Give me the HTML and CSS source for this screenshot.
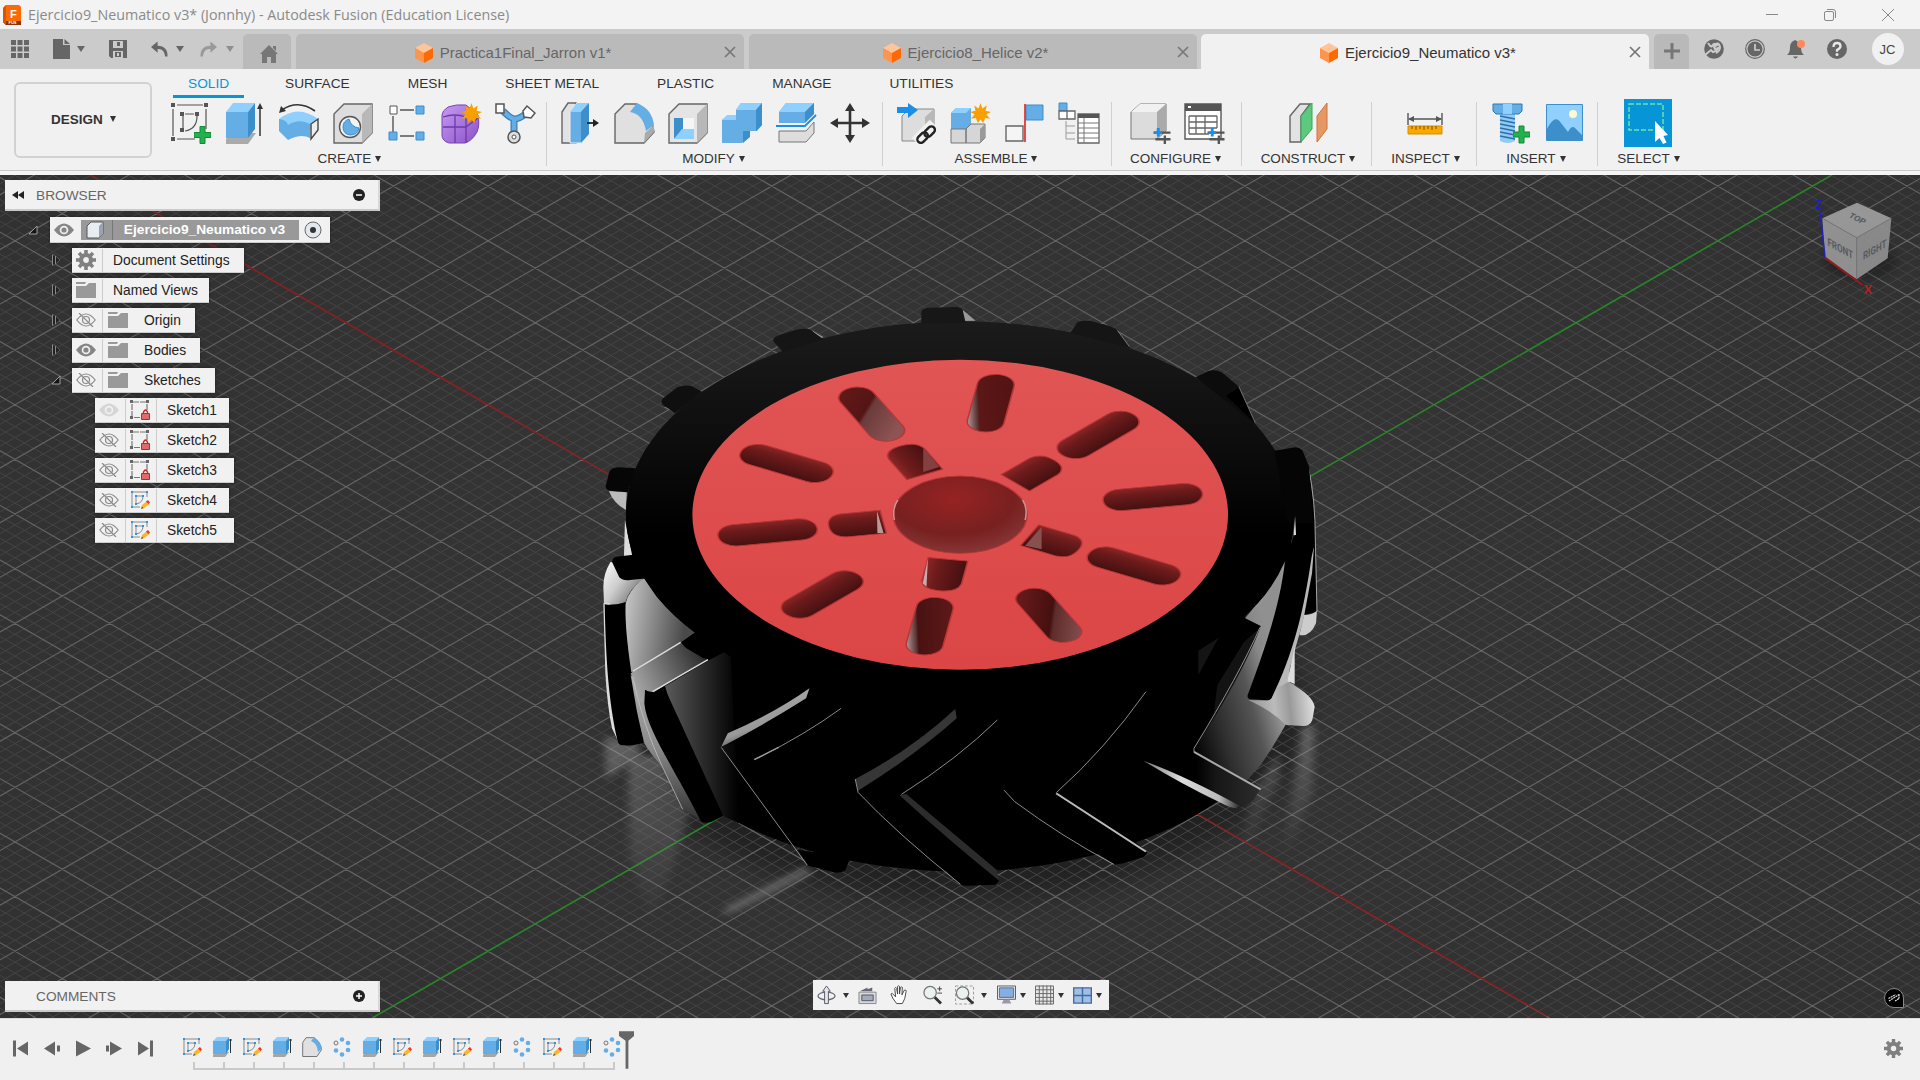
FILE: index.html
```html
<!DOCTYPE html>
<html lang="en">
<head>
<meta charset="utf-8">
<title>Ejercicio9_Neumatico v3* (Jonnhy) - Autodesk Fusion (Education License)</title>
<link rel="stylesheet" href="styles.css">
</head>
<body>
<svg class="defs" width="0" height="0" aria-hidden="true">
  <defs>
    <linearGradient id="gPurple" x1="0" y1="0" x2="1" y2="1"><stop offset="0" stop-color="#c79bf2"/><stop offset="1" stop-color="#8a52c8"/></linearGradient>
  </defs>
  <symbol id="doc-cube" viewBox="0 0 18 20"><path d="M9 0l9 5-9 5-9-5z" fill="#ffc49a"/><path d="M0 5l9 5v10l-9-5z" fill="#ff944d"/><path d="M18 5l-9 5v10l9-5z" fill="#ff6a00"/></symbol>
  <symbol id="close" viewBox="0 0 12 12"><path d="M1 1l10 10M11 1L1 11" stroke="currentColor" stroke-width="1.7"/></symbol>
  <symbol id="star" viewBox="0 0 20 20"><path d="M10 0l1.800 5.200L16 2.400l-1.200 5L20 8.500l-4.400 2.300 3.400 4.200-4.600-.8L12.600 19 10 15.800 7.400 19l-1.800-4.800L1 15l3.400-4.200L0 8.500l5.200-1.100L4 2.400l4.200 2.800z" fill="#f9a000"/></symbol>
  <symbol id="cfg" viewBox="0 0 18 18"><path d="M0 6h18M2 13h16M12 9v9" stroke="#555" stroke-width="2.500"/><path d="M5 1v9M1 6h8" stroke="#1a8fe6" stroke-width="3"/></symbol>
  <symbol id="plus" viewBox="0 0 17 17"><path d="M6 0h5v6h6v5h-6v6H6v-6H0V6h6z" fill="#22b14c" stroke="#138a35"/></symbol>

  <symbol id="r-sketch" viewBox="0 0 42 42"><g fill="none" stroke="#555" stroke-width="1.200"><path d="M7 3h26M3 7v27M36 7v20M7 37h18M13 14v12M15 12h9M27 14q0 13-12 15"/></g><path d="M1 1h4v4H1zM34 1h4v4h-4zM1 35h4v4H1zM10 10h4v4h-4zM25 10h4v4h-4zM10 26h4v4h-4z" fill="#555"/><use href="#plus" x="24" y="24" width="17" height="18"/></symbol>
  <symbol id="r-extrude" viewBox="0 0 42 42"><path d="M2 37l7-6h23l-8 11H2z" fill="#aaa"/><path d="M2 10L9 1h22l-7 9z" fill="#8fd0ff"/><path d="M2 10h22v26H2z" fill="#64ade5"/><path d="M24 10l7-9v26l-7 9z" fill="#3d8fcb"/><path d="M36 34V4" stroke="#333" stroke-width="1.500"/><path d="M36 1l3 6h-6z" fill="#333"/></symbol>
  <symbol id="r-revolve" viewBox="0 0 42 42"><path d="M1 17Q20 2 40 17l-7 11q-10-7-24 0z" fill="#8fd0ff"/><path d="M1 17q8 1 9 6 11-7 22-1v14q-9-5-22 2L1 29z" fill="#64ade5"/><path d="M33 22l7-5v11l-7 9z" fill="#eee" stroke="#444" stroke-width="1.400"/><path d="M4 8Q20-3 37 9" fill="none" stroke="#333" stroke-width="1.600"/><path d="M1 11l2-7 5 5z" fill="#333"/></symbol>
  <symbol id="r-hole" viewBox="0 0 42 42"><path d="M2 12L12 2h28v29L30 41H2z" fill="#ddd" stroke="#666" stroke-width="1.400"/><path d="M30 12L40 2v29L30 41z" fill="#b8b8b8"/><circle cx="18" cy="25" r="10.500" fill="#f3f3f3" stroke="#555" stroke-width="1.400"/><path d="M17 17q2 8 10 9-1 7-9 7-7-1-7-8 0-6 6-8z" fill="#64ade5" stroke="#3d8fcb"/></symbol>
  <symbol id="r-pattern" viewBox="0 0 42 42"><path d="M14 8h14M7 14v16M14 34h14" stroke="#555" stroke-width="1.400"/><path d="M4 4h7v8H4z" fill="#fff" stroke="#555"/><path d="M30 4h8v8h-8zM3 30h8v8H3zM30 30h8v8h-8z" fill="#64ade5" stroke="#3d8fcb"/></symbol>
  <symbol id="r-form" viewBox="0 0 42 42"><path d="M2 13Q2 9 8 5q8-3 18-2l12 10q2 10-1 17-5 9-12 11H9q-7-2-7-8z" fill="url(#gPurple)" stroke="#7b43b8"/><path d="M3 25h23l12-9M15 14v27M26 14v27M3 15q12-4 23 0l8-7" fill="none" stroke="#6d3aa8" stroke-width="1.300"/><use href="#star" x="21" y="1" width="21" height="21"/></symbol>
  <symbol id="r-pipe" viewBox="0 0 42 42"><path d="M9 9q8 8 12 8t12-6M20 16v19" fill="none" stroke="#3d7fb0" stroke-width="7"/><path d="M9 9q8 8 12 8t12-6M20 16v19" fill="none" stroke="#64ade5" stroke-width="4.500"/><path d="M2 2h8v9H2z" fill="#fff" stroke="#555" stroke-width="1.500"/><path d="M33 4l8 7-4 5-7-1-1-6z" fill="#fff" stroke="#555" stroke-width="1.500"/><circle cx="20" cy="35" r="6" fill="#ddd" stroke="#555" stroke-width="1.500"/><circle cx="20" cy="35" r="2" fill="#fff" stroke="#555"/></symbol>
  <symbol id="r-press" viewBox="0 0 42 42"><path d="M3 10L9 1h8v40H3z" fill="#e2e2e2" stroke="#666" stroke-width="1.400"/><path d="M11 10l7-9h12v31l-8 9H11z" fill="#64ade5" stroke="#f1f1f1"/><path d="M11 10l7-9h12l-8 9z" fill="#8fd0ff"/><path d="M22 10l8-9v31l-8 9z" fill="#3d8fcb"/><path d="M28 21h8" stroke="#222" stroke-width="1.800"/><path d="M34 17l6 4-6 4z" fill="#222"/></symbol>
  <symbol id="r-fillet" viewBox="0 0 42 42"><path d="M2 12L12 2h11q14 7 18 28L31 41H2z" fill="#e0e0e0" stroke="#666" stroke-width="1.400"/><path d="M17 10L24 1q15 6 17 22l-8 6Q30 12 17 10z" fill="#64ade5"/><path d="M32 31l9-8v7L31 41z" fill="#aaa"/></symbol>
  <symbol id="r-shell" viewBox="0 0 42 42"><path d="M2 12L12 2h28v29L30 41H2z" fill="#e4e4e4" stroke="#666" stroke-width="1.400"/><path d="M30 12L40 2v29L30 41z" fill="#b8b8b8"/><path d="M7 16h20v21H7z" fill="#f5f5f5"/><path d="M7 16h9v12l-9 9z" fill="#3d8fcb"/><path d="M7 37l8-10h12v10z" fill="#8fd0ff"/></symbol>
  <symbol id="r-combine" viewBox="0 0 42 42"><path d="M1 18l5-4h9V8l5-7h21v22l-5 6h-9v6l-6 6H1z" fill="#64ade5"/><path d="M15 8l5-7h21l-6 7zM1 18l5-5h9v5z" fill="#8fd0ff"/><path d="M35 8l6-7v22l-6 6zM22 29h7v6l-7 6z" fill="#3d8fcb"/></symbol>
  <symbol id="r-split" viewBox="0 0 42 42"><path d="M4 10l7-9h28v12l-9 8H4z" fill="#64ade5"/><path d="M4 10l7-9h28l-9 9z" fill="#8fd0ff"/><path d="M30 10l9-9v12l-9 8z" fill="#3d8fcb"/><path d="M4 29h27l8-9v11l-8 9H4z" fill="#ddd" stroke="#777"/><path d="M1 24h29l11-11" fill="none" stroke="#f1f1f1" stroke-width="4"/><path d="M1 24h29l11-11" fill="none" stroke="#1a8fe6" stroke-width="1.800"/></symbol>
  <symbol id="r-move" viewBox="0 0 42 42"><path d="M21 5v32M5 21h32" stroke="#333" stroke-width="2.600"/><path d="M21 1l5 8H16zM21 41l5-8H16zM1 21l8-5v10zM41 21l-8-5v10z" fill="#333"/></symbol>
  <symbol id="r-insertlink" viewBox="0 0 42 42"><path d="M6 14l7-7h25v22l-9 10H6z" fill="#ddd" stroke="#888"/><path d="M29 15l9-8v22l-9 10z" fill="#b8b8b8"/><path d="M1 5h11V1l10 7-10 8v-5H1z" fill="#1a8fe6"/><path d="M20 40l18-18" stroke="#f1f1f1" stroke-width="12"/><g fill="none" stroke="#222" stroke-width="2.400"><rect x="21" y="32" width="12" height="7" rx="3.500" transform="rotate(-45 27 36)"/><rect x="28" y="26" width="12" height="7" rx="3.500" transform="rotate(-45 34 30)"/></g></symbol>
  <symbol id="r-component" viewBox="0 0 42 42"><path d="M1 11l5-5h15v17l-4 4H1z" fill="#64ade5"/><path d="M1 11l5-5h15l-5 5z" fill="#8fd0ff"/><path d="M1 27h15v14H1zM16 27l5-5h14v14l-5 5H16z" fill="#d6d6d6" stroke="#777"/><path d="M30 27l5-5v14l-5 5z" fill="#999"/><use href="#star" x="20" y="1" width="21" height="21"/></symbol>
  <symbol id="r-joint" viewBox="0 0 42 42"><path d="M22 3h17v15H22z" fill="#64ade5" stroke="#3d8fcb"/><path d="M2 24h17v15H2z" fill="#f5f5f5" stroke="#666" stroke-width="1.400"/><path d="M21 2v38" stroke="#d22" stroke-width="1.600"/></symbol>
  <symbol id="r-bom" viewBox="0 0 42 42"><path d="M1 1h8v8H1z" fill="#64ade5" stroke="#3d8fcb"/><path d="M1 9h8v8H1zM9 9h8v8H9z" fill="#fff" stroke="#666" stroke-width="1.300"/><path d="M8 19v18M8 24h9M8 31h9M8 37h9" stroke="#999" fill="none"/><path d="M20 12h21v29H20z" fill="#fff" stroke="#666" stroke-width="1.300"/><path d="M20 12h21v4H20z" fill="#555"/><path d="M20 21h21M20 26h21M20 31h21M20 36h21M26 16v25" stroke="#777"/></symbol>
  <symbol id="r-config" viewBox="0 0 42 42"><path d="M2 10l9-8h26v27l-9 8H2z" fill="#dcdcdc" stroke="#777"/><path d="M2 10l9-8h26l-9 8z" fill="#f1f1f1"/><path d="M28 10l9-8v27l-9 8z" fill="#aaa"/><use href="#cfg" x="24" y="25" width="18" height="17"/></symbol>
  <symbol id="r-table" viewBox="0 0 42 42"><path d="M2 2h36v35H2z" fill="#fff" stroke="#555" stroke-width="1.400"/><path d="M2 2h36v7H2z" fill="#555"/><path d="M5 4h3v2H5z" fill="#fff"/><path d="M6 14h28M6 20h28M6 26h28M6 32h20M6 14v18M13 14v18M22 14v18M34 14v12" stroke="#666" fill="none" stroke-width="1.300"/><use href="#cfg" x="24" y="25" width="18" height="17"/></symbol>
  <symbol id="r-plane" viewBox="0 0 42 42"><path d="M2 14L12 2h10L13 14v26H2z" fill="#e2e2e2" stroke="#666" stroke-width="1.400"/><path d="M13 14L24 1v26L13 40z" fill="#5cc97f" stroke="#35a65b"/><path d="M29 14L39 1v26L29 40z" fill="#e59864" stroke="#c87740"/></symbol>
  <symbol id="r-measure" viewBox="0 0 42 42"><path d="M4 11v12M38 11v12M5 17h32" stroke="#555" stroke-width="1.400"/><path d="M4 17l6-3v6zM38 17l-6-3v6z" fill="#555"/><path d="M4 24h34v8H4z" fill="#f9a800" stroke="#d98c00"/><path d="M8 24v3M12 24v4M16 24v3M20 24v4M24 24v3M28 24v4M32 24v3" stroke="#7a5200"/></symbol>
  <symbol id="r-bolt" viewBox="0 0 42 42"><path d="M8 11h15v28q-7 4-15 0z" fill="#8ecbf7"/><path d="M8 14l15 3M8 18l15 3M8 22l15 3M8 26l15 3M8 30l15 3M8 34l15 3" stroke="#2e6fa5" stroke-width="1.500"/><path d="M1 2h29v7l-3 3H4L1 9z" fill="#64ade5" stroke="#2f78b3"/><path d="M11 2h9v10h-9z" fill="#8fd0ff"/><use href="#plus" x="21" y="23" width="17" height="19"/></symbol>
  <symbol id="r-image" viewBox="0 0 42 42"><path d="M2.500 2.500h36v36h-36z" fill="#8fd0ff" stroke="#3d8fcb"/><path d="M3 27q8-16 14-6l7 9q4-8 8-3l6 6v5H3z" fill="#3d8fcb"/><circle cx="29" cy="12" r="4" fill="#fffbd0"/></symbol>
  <symbol id="r-select" viewBox="0 0 48 48"><path d="M0 0h48v48H0z" fill="#0696d7"/><path d="M5 5h34v26H5z" fill="none" stroke="#6fe0a8" stroke-width="1.500" stroke-dasharray="5 2"/><path d="M31 22v21l4.500-4 3.500 6 3.500-1.500-3-6.500 4.500-1z" fill="#fff"/></symbol>

  <symbol id="t-sketch" viewBox="0 0 20 20"><path d="M2 2h15v5M2 2v15h8M6 6h7M6 6v8q7-1 7-8" fill="none" stroke="#8a8a8a" stroke-width="1"/><path d="M1 1h2v2H1zM16 1h2v2h-2zM1 16h2v2H1zM5 5h2v2H5zM12 5h2v2h-2zM5 13h2v2H5z" fill="#2b95e0"/><path d="M11 19l1-4 5-4 2.500 3-5 4z" fill="#f7b733"/><path d="M16 11.500l2-1.500 2 2.500-1.500 1.500z" fill="#e33"/><path d="M11 19l1-2.500 1.500 1.500z" fill="#555"/></symbol>
  <symbol id="t-extrude" viewBox="0 0 20 20"><path d="M1 18l3-3h13l-4 5H1z" fill="#a5a5a5"/><path d="M1 4l4-4h12l-3 4z" fill="#8fd0ff"/><path d="M1 4h13v13H1z" fill="#64ade5"/><path d="M14 4l3-4v12l-3 5z" fill="#3d8fcb"/><path d="M18.500 2v14M17 3h3" stroke="#333"/></symbol>
  <symbol id="t-fillet" viewBox="0 0 20 20"><path d="M.7 5.500L4 .700h8q7 5 7.500 12L15 19.500H.700z" fill="#e0e0e0" stroke="#777"/><path d="M9 4l3-3.500q7 4 8 11L16 15Q15 6 9 4z" fill="#64ade5"/></symbol>
  <symbol id="t-pattern" viewBox="0 0 20 20"><g fill="#64ade5"><circle cx="10" cy="2.500" r="2.300"/><circle cx="16" cy="6" r="2.300"/><circle cx="16" cy="13" r="2.300"/><circle cx="10" cy="17.500" r="2.300"/><circle cx="4" cy="13.500" r="2.300"/></g><circle cx="4" cy="6" r="2" fill="#eee" stroke="#777"/></symbol>

  <symbol id="gear" viewBox="0 0 20 20"><circle cx="10" cy="10" r="5" fill="none" stroke="currentColor" stroke-width="4.200"/><path d="M10 0v4M10 16v4M0 10h4M16 10h4M3 3l3 3M14 14l3 3M3 17l3-3M14 6l3-3" stroke="currentColor" stroke-width="3.600"/></symbol>
  <symbol id="folder" viewBox="0 0 22 18"><path d="M1 1h10l-1 2H1zM1 5h10l3-3h7v15H1z" fill="#999"/></symbol>
  <symbol id="eye" viewBox="0 0 20 14"><path d="M0 7q10-13 20 0-10 13-20 0z" fill="#858585"/><circle cx="10" cy="7" r="4.300" fill="#f1f1f1"/><circle cx="10" cy="7" r="2.600" fill="#858585"/></symbol>
  <symbol id="eye-off" viewBox="0 0 20 14"><path d="M.8 7q9.200-12 18.400 0-9.200 12-18.400 0z" fill="none" stroke="#8a8a8a" stroke-width="1.200"/><circle cx="10" cy="7" r="3.500" fill="none" stroke="#8a8a8a" stroke-width="1.200"/><path d="M3 0l14 14" stroke="#8a8a8a" stroke-width="1.200"/></symbol>
  <symbol id="locked" viewBox="0 0 20 20"><path d="M3 2h13M2 4v12M17 4v6M4 17.500h6" stroke="#777" stroke-width="1.200" stroke-dasharray="6 1"/><path d="M0 0h3v3H0zM16 0h3v3h-3zM0 16h3v3H0z" fill="#666"/><path d="M13.500 13v-1q2-4 4 0v1" stroke="#c22" stroke-width="1.400" fill="none"/><path d="M11.500 13.500h8v6h-8z" fill="#e06a6a" stroke="#c22"/></symbol>
  <symbol id="shut" viewBox="0 0 10 12"><path d="M1.500 1v10h2l5.500-5-5.500-5z" fill="#222" stroke="#666" stroke-width=".8"/><path d="M1.500 .5v11M4.500 2v8" stroke="#8a8a8a" stroke-width="1"/></symbol>
  <symbol id="open" viewBox="0 0 10 10"><path d="M9 1v8H1z" fill="#151515" stroke="#a0a0a0" stroke-width="1"/></symbol>
</svg>

<header class="titlebar">
  <svg class="app-logo" viewBox="0 0 18 20"><path d="M0 3l3-3h13l2 2v18H3l-3-3z" fill="#ff6a00"/><path d="M0 16h18v4H3l-3-3z" fill="#8b3500"/><path d="M0 3l3-3v20l-3-3z" fill="#d95500"/><text x="7" y="12.500" font-size="11" font-weight="700" fill="#fff">F</text><text x="5.500" y="19" font-size="4" font-weight="700" fill="#fff">FUS</text></svg>
  <span class="title">Ejercicio9_Neumatico v3* (Jonnhy) - Autodesk Fusion (Education License)</span>
  <div class="window-buttons">
    <svg viewBox="0 0 12 12"><path d="M0 5.500h12" stroke="#888"/></svg>
    <svg viewBox="0 0 12 12"><rect x=".5" y="2.500" width="9" height="9" rx="1.500" fill="none" stroke="#888"/><path d="M3 .500h6q2.500 0 2.500 2.500v6" fill="none" stroke="#888"/></svg>
    <svg viewBox="0 0 12 12"><path d="M0 0l12 12M12 0L0 12" stroke="#888"/></svg>
  </div>
</header>

<nav class="tabbar">
  <div class="quick">
    <svg class="q-grid" viewBox="0 0 18 18"><path d="M0 0h5v5H0zM6.500 0h5v5h-5zM13 0h5v5h-5zM0 6.500h5v5H0zM6.500 6.500h5v5h-5zM13 6.500h5v5h-5zM0 13h5v5H0zM6.500 13h5v5h-5zM13 13h5v5h-5z" fill="#666"/></svg>
    <svg class="q-file" viewBox="0 0 17 20"><path d="M0 0h10v6h7v14H0zM11.500 0L17 5h-5.500z" fill="#666"/></svg><i class="caret"></i>
    <svg class="q-save" viewBox="0 0 18 18"><path d="M0 0h18v18H2l-2-2z" fill="#666"/><path d="M4 1h10v7H4zM4 11h10v7H4z" fill="#cbcbcb"/><path d="M8 2h3v4H8zM6 12h6v5H6z" fill="#666"/><path d="M8 13h2v3H8z" fill="#cbcbcb"/></svg>
    <svg class="q-undo" viewBox="0 0 18 16"><path d="M7 0L0 6l7 6V8q7-1 8 8h2.500Q18 5 7 4.500z" fill="#666"/></svg><i class="caret"></i>
    <svg class="q-redo" viewBox="0 0 18 16"><path d="M11 0l7 6-7 6V8q-7-1-8 8H.500Q0 5 11 4.500z" fill="#999"/></svg><i class="caret light"></i>
  </div>
  <div class="home"><svg viewBox="0 0 18 18"><path d="M9 0l9 9h-2v9h-5v-6H7v6H2V9H0zM13 1h3v5l-3-3z" fill="#777"/></svg></div>
  <div class="doc"><span class="doc-name"><svg><use href="#doc-cube"/></svg>Practica1Final_Jarron v1*</span><svg class="x"><use href="#close"/></svg></div>
  <div class="doc"><span class="doc-name"><svg><use href="#doc-cube"/></svg>Ejercicio8_Helice v2*</span><svg class="x"><use href="#close"/></svg></div>
  <div class="doc active"><span class="doc-name"><svg><use href="#doc-cube"/></svg>Ejercicio9_Neumatico v3*</span><svg class="x"><use href="#close"/></svg></div>
  <div class="add"><svg viewBox="0 0 16 16"><path d="M8 0v16M0 8h16" stroke="#777" stroke-width="3"/></svg></div>
  <div class="account">
    <svg viewBox="0 0 20 20"><circle cx="10" cy="10" r="9.800" fill="#666"/><path d="M1 16l6-5 2 2 3-1 2-3-3 1-1-2 3-2-3-1-3 3M4 4l3 4M10 6q5-4 6 2 0 4-4 6" stroke="#cbcbcb" stroke-width="2" fill="none"/></svg>
    <svg viewBox="0 0 20 20"><circle cx="10" cy="10" r="9.300" fill="none" stroke="#666" stroke-width="1.200"/><circle cx="10" cy="10" r="7.500" fill="#666"/><path d="M10 5v6h5" stroke="#cbcbcb" stroke-width="1.700" fill="none"/></svg>
    <svg viewBox="0 0 20 20"><path d="M1 16q3-2 3-8 0-5 5-7 5 2 6 7 0 6 3 8zM7 17.500h5q-2.500 4-5 0z" fill="#666"/><circle cx="15" cy="5" r="4" fill="#ff8a5c"/></svg>
    <svg viewBox="0 0 20 20"><circle cx="10" cy="10" r="10" fill="#666"/><path d="M6.500 8q0-4 3.500-4t3.500 3.300q0 2-3.500 3.700v1.700" stroke="#e8e8e8" stroke-width="2.300" fill="none"/><circle cx="10" cy="15.500" r="1.500" fill="#e8e8e8"/></svg>
    <span class="avatar">JC</span>
  </div>
</nav>

<section class="ribbon">
  <button class="workspace">DESIGN <i class="caret dark"></i></button>
  <div class="ribbon-main">
    <div class="ribbon-tabs"><span class="current">SOLID</span><span>SURFACE</span><span>MESH</span><span>SHEET METAL</span><span>PLASTIC</span><span>MANAGE</span><span>UTILITIES</span></div>
    <div class="groups">
      <div class="group create"><div class="icons"><svg><use href="#r-sketch"/></svg><svg><use href="#r-extrude"/></svg><svg><use href="#r-revolve"/></svg><svg><use href="#r-hole"/></svg><svg><use href="#r-pattern"/></svg><svg><use href="#r-form"/></svg><svg><use href="#r-pipe"/></svg></div><div class="label">CREATE<i class="caret dark"></i></div></div>
      <div class="group modify"><div class="icons"><svg><use href="#r-press"/></svg><svg><use href="#r-fillet"/></svg><svg><use href="#r-shell"/></svg><svg><use href="#r-combine"/></svg><svg><use href="#r-split"/></svg><svg><use href="#r-move"/></svg></div><div class="label">MODIFY<i class="caret dark"></i></div></div>
      <div class="group assemble"><div class="icons"><svg><use href="#r-insertlink"/></svg><svg><use href="#r-component"/></svg><svg><use href="#r-joint"/></svg><svg><use href="#r-bom"/></svg></div><div class="label">ASSEMBLE<i class="caret dark"></i></div></div>
      <div class="group configure"><div class="icons"><svg><use href="#r-config"/></svg><svg><use href="#r-table"/></svg></div><div class="label">CONFIGURE<i class="caret dark"></i></div></div>
      <div class="group construct"><div class="icons"><svg><use href="#r-plane"/></svg></div><div class="label">CONSTRUCT<i class="caret dark"></i></div></div>
      <div class="group inspect"><div class="icons"><svg><use href="#r-measure"/></svg></div><div class="label">INSPECT<i class="caret dark"></i></div></div>
      <div class="group insert"><div class="icons"><svg><use href="#r-bolt"/></svg><svg><use href="#r-image"/></svg></div><div class="label">INSERT<i class="caret dark"></i></div></div>
      <div class="group select"><div class="icons"><svg><use href="#r-select"/></svg></div><div class="label">SELECT<i class="caret dark"></i></div></div>
    </div>
  </div>
</section>

<main class="viewport">
  <svg class="scene" viewBox="0 175 1920 843">
    <defs>
      <radialGradient id="bgShade" cx=".5" cy=".45" r=".7"><stop offset="0" stop-color="#353535"/><stop offset="1" stop-color="#313131"/></radialGradient>
      <filter id="soft" x="-30%" y="-30%" width="160%" height="160%"><feGaussianBlur stdDeviation="14"/></filter>
      <filter id="haze" x="-30%" y="-30%" width="160%" height="160%"><feGaussianBlur stdDeviation="9"/></filter>
      <filter id="touch" x="-10%" y="-10%" width="120%" height="120%"><feGaussianBlur stdDeviation="3"/></filter>
      <linearGradient id="rim" x1="0" y1="0" x2="0" y2="1"><stop offset="0" stop-color="#1b1b1b"/><stop offset=".35" stop-color="#0b0b0b"/><stop offset=".55" stop-color="#000"/></linearGradient>
      <linearGradient id="disc" x1="0" y1="0" x2="0" y2="1"><stop offset="0" stop-color="#e15555"/><stop offset="1" stop-color="#db4545"/></linearGradient>
      <radialGradient id="bore" cx=".45" cy=".3" r=".75"><stop offset="0" stop-color="#972323"/><stop offset=".6" stop-color="#782020"/><stop offset="1" stop-color="#8a3a3a"/></radialGradient>
      <linearGradient id="dn" x1="0" y1="0" x2="0" y2="1"><stop offset="0" stop-color="#8a2626"/><stop offset=".3" stop-color="#6d1b1b"/><stop offset="1" stop-color="#451010"/></linearGradient>
      <linearGradient id="up" x1="0" y1="1" x2="0" y2="0"><stop offset="0" stop-color="#8a2626"/><stop offset=".3" stop-color="#6d1b1b"/><stop offset="1" stop-color="#451010"/></linearGradient>
      <linearGradient id="edgeA" x1="0" y1="0" x2=".5" y2="1"><stop offset="0" stop-color="#c9b5b5"/><stop offset=".3" stop-color="#5a3030"/><stop offset=".34" stop-color="#5c1717"/><stop offset="1" stop-color="#551313"/></linearGradient>
      <linearGradient id="edgeB" x1="1" y1="1" x2=".5" y2="0"><stop offset="0" stop-color="#c9b5b5"/><stop offset=".3" stop-color="#5a3030"/><stop offset=".34" stop-color="#481212"/><stop offset="1" stop-color="#5c1717"/></linearGradient>
      <linearGradient id="fadeIn" x1="1" y1="0" x2="0" y2=".35"><stop offset="0" stop-color="#651919"/><stop offset=".5" stop-color="#551515"/><stop offset=".55" stop-color="#6b3b3b"/><stop offset="1" stop-color="#8f5353"/></linearGradient>
      <linearGradient id="fadeOut" x1="0" y1=".6" x2="1" y2="0"><stop offset="0" stop-color="#651919"/><stop offset=".45" stop-color="#451010"/><stop offset=".5" stop-color="#5f2c2c"/><stop offset="1" stop-color="#8b5555"/></linearGradient>
      <linearGradient id="wallL" gradientUnits="userSpaceOnUse" x1="105" y1="0" x2="310" y2="30"><stop offset="0" stop-color="#d8d8d8"/><stop offset=".15" stop-color="#bcbcbc"/><stop offset="1" stop-color="#4a4a4a"/></linearGradient>
      <linearGradient id="wallL2" gradientUnits="userSpaceOnUse" x1="225" y1="0" x2="446" y2="0"><stop offset="0" stop-color="#5a5a5a"/><stop offset=".5" stop-color="#2c2c2c"/><stop offset=".88" stop-color="#0a0a0a"/><stop offset="1" stop-color="#000"/></linearGradient>
      <linearGradient id="stepL" gradientUnits="userSpaceOnUse" x1="125" y1="370" x2="330" y2="270"><stop offset="0" stop-color="#a8a8a8"/><stop offset="1" stop-color="#2c2c2c"/></linearGradient>
      <linearGradient id="toeL" gradientUnits="userSpaceOnUse" x1="0" y1="340" x2="0" y2="780"><stop offset="0" stop-color="#b0b0b0"/><stop offset=".5" stop-color="#8a8a8a"/><stop offset="1" stop-color="#333"/></linearGradient>
      <linearGradient id="lugL" gradientUnits="userSpaceOnUse" x1="42" y1="40" x2="130" y2="100"><stop offset="0" stop-color="#eee"/><stop offset=".5" stop-color="#ccc"/><stop offset="1" stop-color="#8a8a8a"/></linearGradient>
      <linearGradient id="wallR" gradientUnits="userSpaceOnUse" x1="190" y1="900" x2="480" y2="820"><stop offset="0" stop-color="#050505"/><stop offset=".3" stop-color="#2e2e2e"/><stop offset=".65" stop-color="#555"/><stop offset="1" stop-color="#aaa"/></linearGradient>
      <linearGradient id="lugR" gradientUnits="userSpaceOnUse" x1="370" y1="820" x2="555" y2="800"><stop offset="0" stop-color="#999"/><stop offset=".35" stop-color="#bbb"/><stop offset=".6" stop-color="#999"/><stop offset="1" stop-color="#e2e2e2"/></linearGradient>
      <linearGradient id="footR" gradientUnits="userSpaceOnUse" x1="200" y1="0" x2="390" y2="0"><stop offset="0" stop-color="#000"/><stop offset=".3" stop-color="#161616"/><stop offset="1" stop-color="#2c2c2c"/></linearGradient>
      <linearGradient id="wedge" gradientUnits="userSpaceOnUse" x1="40" y1="0" x2="325" y2="0"><stop offset="0" stop-color="#777"/><stop offset=".4" stop-color="#ddd"/><stop offset=".8" stop-color="#bbb"/><stop offset="1" stop-color="#333"/></linearGradient>
      <linearGradient id="lugFace" x1="0" y1="0" x2=".5" y2="1"><stop offset="0" stop-color="#b5b5b5"/><stop offset=".7" stop-color="#999"/><stop offset="1" stop-color="#333"/></linearGradient>
      <linearGradient id="refl" x1="0" y1="0" x2="0" y2="1"><stop offset="0" stop-color="#aaa" stop-opacity=".45"/><stop offset="1" stop-color="#888" stop-opacity="0"/></linearGradient>
    </defs>
    <rect x="0" y="175" width="1920" height="843" fill="url(#bgShade)"/>
    <ellipse cx="960" cy="715" rx="345" ry="185" fill="#000" opacity=".35" filter="url(#soft)"/>
    <path id="minor" class="minor"/>
    <path id="major" class="major"/>
    <path d="M90 175L1547 1016" stroke="#8c1a1a" stroke-width="1.400"/>
    <path d="M1832 175L372 1018" stroke="#1f8a1f" stroke-width="1.400"/>

    <g transform="translate(590 540) scale(.47194 .33333)">
      <g filter="url(#haze)">
        <path d="M32 590L110 615 100 650 35 720zM80 640L150 650 210 820 170 1000 130 1160 85 950z" fill="url(#refl)"/>
        <path d="M1510 560L1535 560 1530 760 1480 940 1470 930zM1400 760L1460 640 1460 720 1380 960z" fill="url(#refl)"/>
      </g>
      <path d="M455 980L290 1100 282 1125 305 1115 470 1000z" fill="#777" opacity=".7" filter="url(#haze)"/>
    </g>

    <g transform="translate(590 290) scale(.47194 .33333)">
      <!-- tyre wall -->
      <clipPath id="wallClip"><path d="M76 600L86 1120 155 1430 235 1600 460 1760H1150L1380 1550 1405 1460 1470 1305 1485 1190V600z"/></clipPath>
      <path d="M76 674V1164A708 580 0 0 0 1492 1164V674z" fill="#000" clip-path="url(#wallClip)"/>
      <path d="M78 607L40 603Q50 640 76 660z" fill="#bbb"/>
      <path d="M74 690L72 800H90z" fill="#ddd"/>
    </g>

    <!-- left side lugs -->
    <g transform="translate(590 560) scale(.33333)">
      <path d="M62 5Q40 40 40 80L42 132Q70 138 106 127 115 90 162 55L130 40z" fill="url(#lugL)"/>
      <path d="M40 130L46 340Q52 440 66 505L88 552 100 500 60 130z" fill="#dcdcdc"/>
      <path d="M44 133Q75 138 106 127C108 250 125 330 137 400L161 548Q120 560 92 555 84 552 82 540C55 420 48 300 44 133z" fill="#000"/>
      <path d="M162 55L200 110Q250 170 315 218L272 248 124 337C112 250 105 190 107 135 115 85 162 55 162 55z" fill="url(#wallL)"/>
      <path d="M122 345L165 393 190 470 335 782 275 745 218 622Q180 580 163 550 148 490 140 450z" fill="url(#toeL)"/>
      <path d="M222 380L400 275 422 290 446 790 400 768z" fill="url(#wallL2)"/>
      <path d="M122 340L272 246 290 265 352 298 195 395Q178 398 165 390 160 440 150 420z" fill="url(#stepL)"/>
      <path d="M165 390Q178 398 193 395L225 378C245 450 290 560 330 640L400 768 365 785Q340 792 332 782C250 620 170 510 163 430z" fill="#000"/>
      <path d="M128 334L272 247M188 395L354 299" stroke="#ddd" stroke-width="4" fill="none"/>
      <path d="M128 350Q160 500 218 622L278 748" stroke="#ccc" stroke-width="2" fill="none"/>
    </g>

    <!-- right side lugs -->
    <g transform="translate(1130 440) scale(.33333)">
      <path d="M465 362Q420 450 345 535L392 558 192 932 195 942 350 1022 390 978Q430 920 466 856L480 720 470 500z" fill="url(#wallR)"/>
      <path d="M465 362Q420 450 345 535L392 558 375 640 430 600z" fill="#888" opacity=".75" filter="url(#touch)"/>
      <path d="M475 100L530 75Q550 150 555 250L560 515 522 525 540 400 500 330z" fill="#000"/>
      <path d="M522 525Q545 525 561 512L558 550Q540 592 508 585z" fill="#ccc"/>
      <path d="M552 320L546 400 520 540 478 690 472 726 495 735 425 785 400 740 520 400z" fill="#b8b8b8"/>
      <path d="M494 620V732L472 724z" fill="#ddd"/>
      <path d="M465 362L490 290 555 250 554 310 545 350C520 520 490 640 424 776Q422 782 410 781L358 778Q349 772 355 760C400 640 450 500 465 362z" fill="#000"/>
      <path d="M355 780L410 782Q424 780 428 770L440 745 475 726Q548 765 554 800L547 840Q540 858 520 858L468 855Q430 815 355 780z" fill="url(#lugR)"/>
      <path d="M536 85Q556 180 556 300L561 515" stroke="#bbb" stroke-width="2.500" fill="none"/>
      <path d="M392 558L345 535 240 560 205 640 190 930 195 925Q330 700 392 558z" fill="#000"/>
      <path d="M392 562L342 606 262 735 250 830 192 930Q330 720 392 562z" fill="#131313"/>
      <path d="M205 632L266 593 205 705z" fill="#141414"/>
      <path d="M195 940L390 1048 372 1078Q345 1105 318 1103L200 1060z" fill="url(#footR)"/>
      <path d="M40 962Q170 1010 330 1098L318 1104Q300 1104 275 1090 150 1030 40 962z" fill="url(#wedge)"/>
      <path d="M192 936L392 1048" stroke="#aaa" stroke-width="6" fill="none"/>
      <path d="M192 936L192 925Q330 700 390 562" stroke="#aaa" stroke-width="2.500" fill="none"/>
    </g>

    <g transform="translate(590 290) scale(.47194 .33333)">
      <!-- upper sidewall and lug tips -->
      <path d="M784 94A708 580 0 0 1 1492 674A708 580 0 0 1 1474 810Q1440 920 1380 985A708 580 0 0 1 784 1254A708 580 0 0 1 76 674A708 580 0 0 1 784 94z" fill="url(#rim)"/>
      <path d="M790 60L817 92 790 93zM470 121L495 142 485 146zM155 350L182 358V368z" fill="#999"/>
      <path d="M702 100V65Q705 53 720 53L775 51Q787 52 790 62L796 98z" fill="#171717"/>
      <path d="M1018 128L1032 98Q1040 90 1060 93L1100 107Q1113 115 1118 122L1145 175z" fill="#151515"/>
      <path d="M495 148L465 118Q455 113 435 120L400 136Q383 145 390 157L409 186z" fill="#151515"/>
      <path d="M1283 262L1310 243Q1325 237 1340 248L1375 290 1412 405z" fill="#0c0c0c"/>
      <path d="M1375 292L1348 318 1410 400z" fill="#000"/>
      <path d="M237 305L215 288Q200 284 185 292L155 325Q148 335 155 345L180 370z" fill="#0f0f0f"/>
      <path d="M1450 482L1495 472Q1510 475 1512 490L1524 530 1532 700H1480z" fill="#050505"/>
      <path d="M97 535L60 532Q43 532 40 550L33 590Q35 603 50 603L80 607z" fill="#060606"/>
      <path d="M92 794L55 800Q45 805 48 820L62 862Q70 873 85 870L122 865z" fill="#000"/>
      <path d="M222 1028L195 1055Q195 1065 205 1075L240 1105Q252 1108 262 1103L300 1075z" fill="#000"/>
      <path d="M1375 290L1410 400M1118 122L1143 170" stroke="#888" stroke-width="2"/>
      <path d="M1494 678L1491 735H1496z" fill="#ddd"/>
    </g>

    <!-- tread pattern -->
    <g transform="translate(590 540) scale(.47194 .33333)">
      <g fill="#000">
        <path d="M440 930L462 977 522 998Q538 998 542 988L552 950z"/>
        <path d="M730 960L785 1034Q790 1038 800 1037L860 1034 867 1022 850 980z"/>
        <path d="M1060 925L1110 973Q1118 974 1130 970L1172 952Q1182 942 1180 935L1150 900z"/>
      </g>
      <path d="M465 445L458 475Q380 545 290 612L278 620 292 580Q390 520 465 445z" fill="url(#lugFace)"/>
      <path d="M774 507L777 535Q690 645 568 752L562 717Q680 630 774 507z" fill="#363636"/>
      <path d="M657 765L670 762 862 990 867 1022Q760 900 657 767z" fill="#2c2c2c"/>
      <g class="seams">
        <path d="M278 622L460 975"/><path d="M532 505Q460 580 355 655"/><path d="M562 717L568 757Q650 880 785 1033"/>
        <path d="M863 540Q780 655 660 763"/><path d="M877 750L900 785Q1000 890 1110 973"/><path d="M1178 455Q1090 630 988 758"/>
      </g>
      <path d="M988 760L1178 935" stroke="#bbb" stroke-width="5" fill="none"/>
      <path d="M348 659L400 622" stroke="#999" stroke-width="4" fill="none"/>
    </g>

    <ellipse cx="960.200" cy="514.700" rx="267.800" ry="155" fill="url(#disc)"/>
    <g transform="translate(960.200 514.700) scale(1 .5788)" stroke="#b83636" stroke-width="1.500">
      <rect x="145" y="-18.500" width="100" height="37" rx="18" transform="rotate(-81)" fill="url(#edgeA)"/>
      <rect x="145" y="-18.500" width="100" height="37" rx="18" transform="rotate(-45)" fill="url(#dn)"/>
      <rect x="145" y="-18.500" width="100" height="37" rx="18" transform="rotate(-9)" fill="url(#dn)"/>
      <rect x="145" y="-18.500" width="100" height="37" rx="18" transform="rotate(27)" fill="url(#dn)"/>
      <rect x="145" y="-18.500" width="100" height="37" rx="18" transform="rotate(63)" fill="url(#fadeOut)"/>
      <rect x="145" y="-18.500" width="100" height="37" rx="18" transform="rotate(99)" fill="url(#edgeB)"/>
      <rect x="145" y="-18.500" width="100" height="37" rx="18" transform="rotate(135)" fill="url(#up)"/>
      <rect x="145" y="-18.500" width="100" height="37" rx="18" transform="rotate(171)" fill="url(#up)"/>
      <rect x="145" y="-18.500" width="100" height="37" rx="18" transform="rotate(207)" fill="url(#up)"/>
      <rect x="145" y="-18.500" width="100" height="37" rx="18" transform="rotate(243)" fill="url(#fadeIn)"/>
      <path d="M78-20H118Q133-18 133 0T118 20H78z" transform="rotate(-45)" fill="url(#dn)"/>
      <path d="M78-20H118Q133-18 133 0T118 20H78z" transform="rotate(27)" fill="url(#dn)"/>
      <path d="M78-20H118Q133-18 133 0T118 20H78z" transform="rotate(99)" fill="url(#up)"/>
      <path d="M78-20H118Q133-18 133 0T118 20H78z" transform="rotate(171)" fill="url(#up)"/>
      <path d="M78-20H118Q133-18 133 0T118 20H78z" transform="rotate(243)" fill="url(#dn)"/>
      <circle r="66.800" fill="url(#bore)"/>
    </g>
    <g transform="translate(590 290) scale(.47194 .33333)">
      <path d="M608 662L622 729H609z" fill="#b99"/><path d="M957 710L922 767 957 778z" fill="#8a5050"/><path d="M706 472L740 531 706 546z" fill="#844040"/><path d="M716 806L705 880 713 890z" fill="#c9a9a9"/>
      <path d="M645 690Q640 655 652 630M922 690Q928 655 917 630" stroke="#c99" stroke-width="3" fill="none"/>
    </g>

    <!-- view cube -->
    <g transform="translate(1780 180) scale(.33333)">
      <ellipse cx="240" cy="240" rx="110" ry="60" fill="#000" opacity=".25" filter="url(#soft)"/>
      <path d="M231 68L334 115 230 173 127 115z" fill="#9c9c9c" opacity=".94"/>
      <path d="M127 115L230 173V298L135 233z" fill="#969696" opacity=".94"/>
      <path d="M334 115L230 173V298L323 235z" fill="#8e8e8e" opacity=".94"/>
      <path d="M127 115L230 173 334 115M230 173V298" stroke="#757575" stroke-width="2.500" fill="none"/>
      <path d="M120 95L135 233" stroke="#2222b8" stroke-width="5"/><path d="M135 233L248 315" stroke="#8f1d1d" stroke-width="6"/>
      <text class="cube-text" transform="matrix(.8 .42 -.5 .62 204 110)">TOP</text>
      <text class="cube-text" transform="matrix(.8 .44 .05 1.100 143 196)">FRONT</text>
      <text class="cube-text" transform="matrix(.8 -.45 0 1.100 249 240)">RIGHT</text>
      <text x="105" y="87" class="axis" fill="#2222b0">Z</text><text x="251" y="341" class="axis" fill="#b02222">X</text>
    </g>
  </svg>

  <aside class="browser">
    <div class="panel-head"><svg class="rewind" viewBox="0 0 12 8"><path d="M6 0v8L0 4zM12 0v8L6 4z" fill="#222"/></svg><span>BROWSER</span><svg class="dot" viewBox="0 0 12 12"><circle cx="6" cy="6" r="6" fill="#222"/><path d="M3 6h6" stroke="#fff" stroke-width="1.500"/></svg></div>
    <div class="tree">
      <div class="row root"><svg class="tw"><use href="#open"/></svg><div class="cells"><span class="c"><svg class="eye"><use href="#eye"/></svg></span><span class="c hl"><svg class="cube" viewBox="0 0 18 18"><path d="M1 5l4-4h12v12l-4 4H1z" fill="#e8ecf3" stroke="#555"/><path d="M13 5l4-4v12l-4 4z" fill="#9aa3b0"/></svg></span><b>Ejercicio9_Neumatico v3</b><span class="c radio"><svg viewBox="0 0 18 18"><circle cx="9" cy="9" r="8" fill="#e3e8ef" stroke="#666"/><circle cx="9" cy="9" r="3" fill="#333"/></svg></span></div></div>
      <div class="row l1"><svg class="tw"><use href="#shut"/></svg><div class="cells w172"><span class="c"><svg class="sq"><use href="#gear"/></svg></span><em>Document Settings</em></div></div>
      <div class="row l1"><svg class="tw"><use href="#shut"/></svg><div class="cells w137"><span class="c"><svg class="fold"><use href="#folder"/></svg></span><em>Named Views</em></div></div>
      <div class="row l1"><svg class="tw"><use href="#shut"/></svg><div class="cells w123"><span class="c"><svg class="eye"><use href="#eye-off"/></svg></span><span class="c nb"><svg class="fold"><use href="#folder"/></svg></span><em>Origin</em></div></div>
      <div class="row l1"><svg class="tw"><use href="#shut"/></svg><div class="cells w128"><span class="c"><svg class="eye"><use href="#eye"/></svg></span><span class="c nb"><svg class="fold"><use href="#folder"/></svg></span><em>Bodies</em></div></div>
      <div class="row l1"><svg class="tw"><use href="#open"/></svg><div class="cells w143"><span class="c"><svg class="eye"><use href="#eye-off"/></svg></span><span class="c nb"><svg class="fold"><use href="#folder"/></svg></span><em>Sketches</em></div></div>
      <div class="row l2"><div class="cells w134"><span class="c"><svg class="eye pale"><use href="#eye"/></svg></span><span class="c"><svg class="sq"><use href="#locked"/></svg></span><em>Sketch1</em></div></div>
      <div class="row l2"><div class="cells w134"><span class="c"><svg class="eye"><use href="#eye-off"/></svg></span><span class="c"><svg class="sq"><use href="#locked"/></svg></span><em>Sketch2</em></div></div>
      <div class="row l2"><div class="cells w139"><span class="c"><svg class="eye"><use href="#eye-off"/></svg></span><span class="c"><svg class="sq"><use href="#locked"/></svg></span><em>Sketch3</em></div></div>
      <div class="row l2"><div class="cells w134"><span class="c"><svg class="eye"><use href="#eye-off"/></svg></span><span class="c"><svg class="sq"><use href="#t-sketch"/></svg></span><em>Sketch4</em></div></div>
      <div class="row l2"><div class="cells w139"><span class="c"><svg class="eye"><use href="#eye-off"/></svg></span><span class="c"><svg class="sq"><use href="#t-sketch"/></svg></span><em>Sketch5</em></div></div>
    </div>
  </aside>

  <div class="comments panel-head"><span>COMMENTS</span><svg class="dot" viewBox="0 0 12 12"><circle cx="6" cy="6" r="6" fill="#222"/><path d="M3 6h6M6 3v6" stroke="#fff" stroke-width="1.500"/></svg></div>

  <div class="navbar">
    <svg viewBox="0 0 20 20"><ellipse cx="10" cy="11" rx="9" ry="4" fill="none" stroke="#667" stroke-width="1.300"/><path d="M8 19V6H6l4-5.500L14 6h-2v13z" fill="#e5e9ee" stroke="#556"/></svg><i class="caret dark"></i>
    <svg class="n2" viewBox="0 0 20 20"><path d="M2 6l8-4v2l5-2v4" fill="#667"/><path d="M1 7h18v12H1z" fill="#d5d8dc" stroke="#888"/><path d="M4 10h12v6H4z" fill="#a3abb8" stroke="#556"/></svg>
    <svg class="n3" viewBox="0 0 20 20"><path d="M7 19Q2 13 1 9q1-2 3 1l2 2L5 3q1-2 2 0l1 6V1q1-1.500 2 0v8l1-7q1-1 2 0l-.5 8L15 5q2-1 2 1-1 9-4 13z" fill="#fff" stroke="#444"/></svg>
    <svg class="n4" viewBox="0 0 20 20"><path d="M12 12l7 7" stroke="#333" stroke-width="3"/><circle cx="7.500" cy="7.500" r="6.500" fill="#eaf1f1" stroke="#777" stroke-width="1.300"/><path d="M15 3.500h5M17.500 1v5M15 8h5" stroke="#444"/></svg>
    <svg class="n5" viewBox="0 0 20 20"><path d="M.5.500h19v19H.500z" fill="none" stroke="#999" stroke-dasharray="3 2"/><path d="M12 12l7 7" stroke="#333" stroke-width="3"/><circle cx="8" cy="8" r="6.500" fill="#eaf1f1" stroke="#777" stroke-width="1.300"/></svg><i class="caret dark"></i>
    <svg class="n6" viewBox="0 0 20 20"><path d="M.5.500h19v14H.500z" fill="#eee" stroke="#556"/><path d="M2.500 2.500h15v10h-15z" fill="#86aede" stroke="#4a6da0"/><path d="M7 15h6l2 4H5z" fill="#99a"/></svg><i class="caret dark"></i>
    <svg class="n7" viewBox="0 0 20 20"><path d="M.5.500h19v19H.500zM4.500 0v20M8.500 0v20M12.500 0v20M16.500 0v20M0 4.500h20M0 8.500h20M0 12.500h20M0 16.500h20" fill="#e8e8e8" stroke="#666"/></svg><i class="caret dark"></i>
    <svg class="n8" viewBox="0 0 20 20"><path d="M.7 2.500h18.600v16H.700z" fill="#9dbfe8" stroke="#456a9c" stroke-width="1.400"/><path d="M10 2v17M0 10.500h20" stroke="#456a9c" stroke-width="1.500"/></svg><i class="caret dark"></i>
  </div>
  <svg class="assist" viewBox="0 0 20 20"><path d="M10 .500a9.500 9.500 0 1 0 0 19h9.500V10A9.500 9.500 0 0 0 10 .500z" fill="#000" stroke="#888"/><path d="M4.500 10.500l7-4M5 13l10-6.500M11 13l4-2.500M15 6v5" stroke="#ddd" stroke-width="1.200" stroke-dasharray="2 .6"/></svg>
</main>

<footer class="timeline">
  <div class="transport">
    <svg viewBox="0 0 16 16"><path d="M0 0h3v16H0zM15 1v14L4 8z" fill="#666"/></svg>
    <svg viewBox="0 0 16 16"><path d="M11 1v14L0 8zM13 5h3v6h-3z" fill="#666"/></svg>
    <svg viewBox="0 0 16 16"><path d="M1 0l15 8L1 16z" fill="#666"/></svg>
    <svg viewBox="0 0 16 16"><path d="M4 1v14l12-7zM0 5h3v6H0z" fill="#666"/></svg>
    <svg viewBox="0 0 16 16"><path d="M13 0h3v16h-3zM1 1v14l11-7z" fill="#666"/></svg>
  </div>
  <div class="history">
    <div class="step"><svg><use href="#t-sketch"/></svg></div><div class="step"><svg><use href="#t-extrude"/></svg></div><div class="step"><svg><use href="#t-sketch"/></svg></div><div class="step"><svg><use href="#t-extrude"/></svg></div><div class="step"><svg><use href="#t-fillet"/></svg></div><div class="step"><svg><use href="#t-pattern"/></svg></div><div class="step"><svg><use href="#t-extrude"/></svg></div><div class="step"><svg><use href="#t-sketch"/></svg></div><div class="step"><svg><use href="#t-extrude"/></svg></div><div class="step"><svg><use href="#t-sketch"/></svg></div><div class="step"><svg><use href="#t-extrude"/></svg></div><div class="step"><svg><use href="#t-pattern"/></svg></div><div class="step"><svg><use href="#t-sketch"/></svg></div><div class="step"><svg><use href="#t-extrude"/></svg></div><div class="step"><svg><use href="#t-pattern"/></svg></div>
  </div>
  <svg class="marker" viewBox="0 0 16 40"><path d="M0 0h16v5l-6 5v30H7V10L0 5z" fill="#666"/></svg>
  <svg class="settings"><use href="#gear"/></svg>
</footer>
<script src="grid.js"></script>
</body>
</html>
```
FILE: styles.css
```css
* { box-sizing: border-box; }
body { margin: 0; width: 1920px; height: 1080px; overflow: hidden; display: flex; flex-direction: column; font-family: "Liberation Sans", Arial, sans-serif; color: #333; background: #f1f1f1; }
svg { display: block; flex: none; }
.defs { position: absolute; }
.caret { flex: none; width: 0; height: 0; border: 4px solid transparent; border-top: 6px solid #666; border-bottom: 0; }
.caret.light { border-top-color: #8f8f8f; }
.caret.dark { border-width: 6px 3.500px 0; border-top-color: #333; }

.titlebar { height: 29px; flex: none; display: flex; align-items: center; padding-left: 3px; background: #f3f3f3; }
.app-logo { width: 18px; height: 20px; }
.title { margin-left: 7px; font-family: "Open Sans", "Noto Sans", sans-serif; font-size: 14.300px; color: #8a8a8a; white-space: nowrap; }
.window-buttons { margin-left: auto; display: flex; gap: 46px; padding-right: 26px; }
.window-buttons svg { width: 12px; height: 12px; }

.tabbar { height: 40px; flex: none; display: flex; align-items: flex-end; background: #cbcbcb; }
.quick { width: 243px; height: 40px; flex: none; display: flex; align-items: center; padding-left: 11px; }
.q-grid { width: 18px; height: 18px; margin-right: 24px; }
.q-file { width: 17px; height: 20px; margin-right: 7px; }
.q-save { width: 18px; height: 18px; margin: 0 24px 0 24px; }
.q-undo, .q-redo { width: 17px; height: 16px; margin-right: 8px; }
.q-redo { margin-left: 16px; margin-right: 9px; }
.home { width: 48px; height: 35px; margin-right: 5px; border-radius: 5px 5px 0 0; background: #bababa; padding: 11px 13px 0 17px; }
.home svg { width: 18px; height: 18px; }
.doc { width: 448px; height: 35px; margin-right: 4.500px; border-radius: 5px 5px 0 0; background: #bababa; color: #666; display: flex; align-items: center; justify-content: flex-end; font-size: 15px; padding-right: 8px; }
.doc-name { flex: 1; display: flex; justify-content: center; align-items: center; gap: 7px; padding: 2px 0 0 6px; }
.doc-name svg { width: 18px; height: 20px; }
.x { width: 12px; height: 12px; color: #777; }
.doc.active { background: #f1f1f1; color: #333; }
.add { width: 35px; height: 35px; border-radius: 5px 5px 0 0; background: #b9b9b9; padding: 9px 10px; }
.add svg { width: 16px; height: 16px; }
.account { height: 40px; margin-left: 15px; display: flex; align-items: center; gap: 21px; }
.account svg { width: 20px; height: 20px; }
.avatar { width: 32px; height: 32px; border-radius: 50%; background: #f1f1f1; font-size: 13px; display: flex; align-items: center; justify-content: center; margin-left: 4px; color: #444; }

.ribbon { height: 106px; flex: none; display: flex; background: #f1f1f1; border-bottom: 4px solid #f4f4f4; box-shadow: inset 0 -1px #c8c8c8; }
.workspace { width: 138px; height: 76px; margin: 13px 0 0 14px; border: 2px solid #d2d2d2; border-radius: 6px; background: none; display: flex; align-items: center; justify-content: center; gap: 7px; font: bold 13.500px "Liberation Sans", Arial, sans-serif; color: #333; padding: 0 0 2px 1px; }
.ribbon-main { margin-left: 1px; flex: 1; }
.ribbon-tabs { height: 29px; display: flex; gap: 58px; padding-left: 20px; font-size: 13.700px; line-height: 29px; }
.ribbon-tabs .current { color: #0696d7; border-bottom: 3px solid #0696d7; padding: 0 15px; margin-right: -17px; }
.groups { display: flex; height: 74px; }
.group { display: flex; flex-direction: column; align-items: center; background: linear-gradient(#d0d0d0, #d0d0d0) right 4px / 1px 64px no-repeat; background-position: right 4px; }
.group.select { background: none; }
.icons { display: flex; height: 50px; align-items: center; gap: 12px; }
.icons svg { width: 42px; height: 42px; }
.create { width: 394px; }
.create .icons { margin-left: 6px; }
.modify { width: 336px; }
.assemble { width: 229px; }
.configure { width: 130px; }
.construct { width: 130px; }
.construct .icons { margin-left: 4px; }
.inspect { width: 105px; }
.insert { width: 121px; }
.insert .icons { gap: 10px; margin-left: 3px; }
.select { width: 99px; }
.select .icons svg { width: 48px; height: 48px; }
.label { display: flex; align-items: center; gap: 4px; margin: 3px 3px 0 0; font-size: 13.500px; line-height: 16px; }
.create .label { margin-right: 1px; }
.construct .label, .inspect .label, .select .label { margin: 3px 0 0 2px; }

.viewport { position: relative; height: 843px; flex: none; overflow: hidden; background: #333; }
.scene { width: 1920px; height: 843px; }
.minor { stroke: #444; stroke-width: 1; fill: none; }
.major { stroke: #636363; stroke-width: 1.200; fill: none; }
.seams { fill: none; stroke: #aaa; stroke-width: 2; }
.cube-text { font: bold 30px Roboto, sans-serif; fill: #555b63; }
.axis { font: bold 38px "Open Sans", sans-serif; }

.browser { position: absolute; left: 5px; top: 5px; width: 375px; }
.panel-head { height: 31px; display: flex; align-items: center; background: #f1f1f1; border-bottom: 2px solid #c9c9c9; border-right: 2px solid #d8d8d8; font-size: 13.700px; line-height: 29px; color: #666; padding: 1px 13px 0 7px; }
.rewind { width: 12px; height: 8px; margin-right: 12px; }
.dot { width: 12px; height: 12px; margin-left: auto; }
.comments { position: absolute; left: 5px; top: 806px; width: 375px; padding-left: 31px; }
.tree { padding-top: 6px; display: flex; flex-direction: column; gap: 4px; }
.row { height: 26px; display: flex; align-items: center; padding-left: 46px; }
.root { padding-left: 23px; }
.l2 { padding-left: 90px; }
.tw { width: 10px; height: 12px; margin-right: 11px; }
.root .tw { margin-right: 12px; }
.cells { height: 25px; background: #f1f1f1; display: flex; align-items: center; box-shadow: inset 0 -1px #ccc, 0 0 3px rgba(0,0,0,.4); }
.root .cells { width: 280px; height: 26px; }
.c { width: 31px; height: 23px; flex: none; display: flex; align-items: center; justify-content: center; border-right: 1px solid #ccc; padding-right: 2px; }
.root .c { border: 0; height: 20px; padding-right: 3px; }
.root .hl { background: #999; border-right: 1px solid #777; height: 20px; width: 32px; }
.nb { border: 0; }
.root b { width: 187px; height: 20px; background: #999; color: #fff; font-size: 13.700px; line-height: 20px; text-align: center; white-space: nowrap; padding-right: 3px; }
.radio svg { width: 18px; height: 18px; margin-right: 1px; }
em { font-style: normal; font-size: 13.800px; padding-left: 10px; white-space: nowrap; color: #222; }
.nb + em { padding-left: 10px; }
.eye { width: 20px; height: 14px; }
.pale { opacity: .25; }
.cube { width: 18px; height: 18px; }
.sq { width: 20px; height: 20px; color: #808080; }
.fold { width: 22px; height: 18px; }
.w172 { width: 172px; } .w137 { width: 137px; } .w123 { width: 123px; } .w128 { width: 128px; } .w143 { width: 143px; } .w134 { width: 134px; } .w139 { width: 139px; }

.navbar { position: absolute; left: 813px; top: 805px; width: 296px; height: 30px; background: #f1f1f1; display: flex; align-items: center; padding-left: 4px; }
.navbar svg { width: 19px; height: 20px; }
.navbar .caret { margin-left: 7px; border-width: 5px 3.500px 0; }
.navbar .n2 { margin-left: 9px; }
.navbar .n3 { margin-left: 13px; }
.navbar .n4 { margin-left: 14px; }
.navbar .n5 { margin-left: 13px; }
.navbar .n6 { margin-left: 10px; }
.navbar .n7, .navbar .n8 { margin-left: 9px; }
.navbar .n6 + .caret, .navbar .n7 + .caret, .navbar .n8 + .caret { margin-left: 4px; }
.assist { position: absolute; left: 1884px; top: 813px; width: 20px; height: 20px; }

.timeline { height: 62px; flex: none; display: flex; align-items: flex-start; background: #f0f0f0; border-top: 1px solid #ddd; }
.transport { display: flex; gap: 15px; padding: 21px 0 0 13px; width: 178px; flex: none; }
.transport svg { width: 16px; height: 17px; }
.history { display: flex; padding-top: 18px; flex: none; }
.step { width: 30px; height: 33px; flex: none; background: linear-gradient(#c9c9c9, #c9c9c9) 15px 25px / 2px 8px no-repeat, linear-gradient(#c9c9c9, #c9c9c9) 0 31px / 30px 2px no-repeat; }
.step:first-child { background-position: 15px 25px, 15px 31px; }
.step:last-child { background-size: 2px 8px, 17px 2px; }
.step svg { width: 20px; height: 20px; margin-left: 4px; }
.marker { width: 15px; height: 40px; margin: 11px 0 0 -9px; }
.settings { width: 19px; height: 19px; margin: 20px 17px 0 auto; color: #808080; }
```
FILE: grid.js
```js
// Isometric ground grid: every fifth line is a major one.
const origin = { x: 961, y: 678 };
const cell = { w: 94.6, h: 54.65 };
const slope = cell.h / cell.w;
let minor = "", major = "";
for (let k = -150; k <= 150; k++) {
  const x = origin.x + (k * cell.w) / 5;
  const up = (175 - origin.y) / slope, down = (1018 - origin.y) / slope;
  const d = `M${(x + up).toFixed(2)} 175L${(x + down).toFixed(2)} 1018M${(x - up).toFixed(2)} 175L${(x - down).toFixed(2)} 1018`;
  if (k % 5 === 0) major += d; else minor += d;
}
document.getElementById("minor").setAttribute("d", minor);
document.getElementById("major").setAttribute("d", major);
```
